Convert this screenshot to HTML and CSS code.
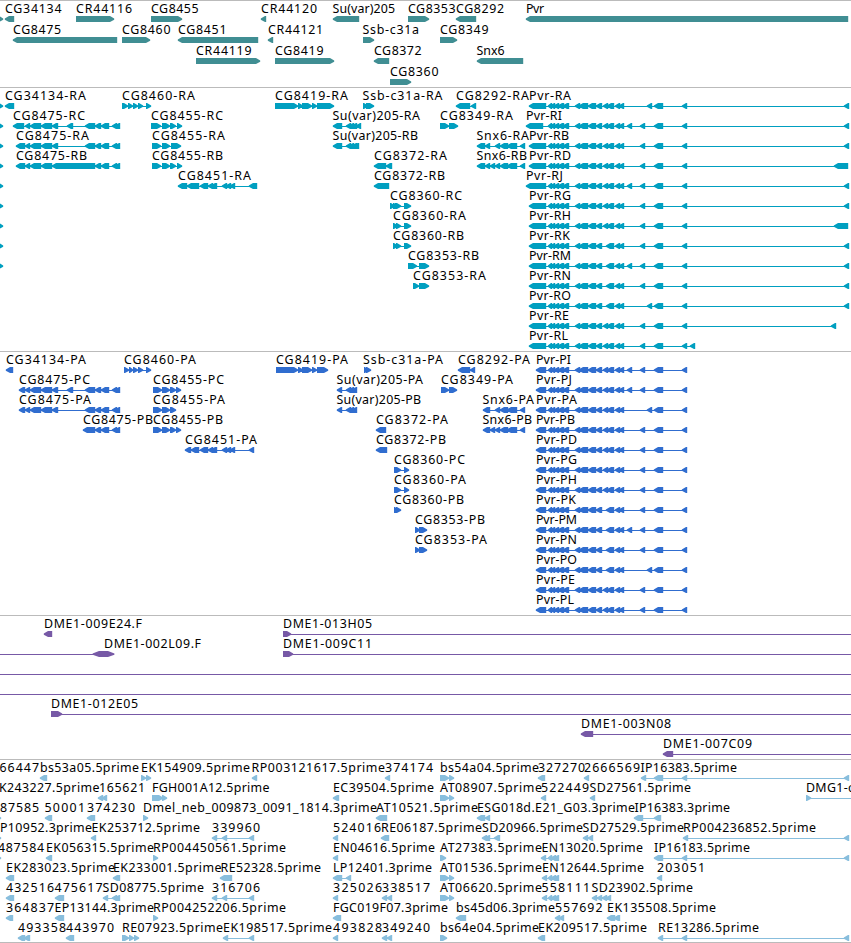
FILE: index.html
```html
<!DOCTYPE html>
<html lang="en">
<head>
<meta charset="utf-8">
<title>Genome tracks</title>
<link rel="stylesheet" href="styles.css">
</head>
<body>
<main class="browser" id="browser"></main>
<script src="tracks.js"></script>
</body>
</html>
```
FILE: styles.css
```css
* { box-sizing: border-box; }

body {
  margin: 0;
  background: #fff;
}

.browser {
  display: flex;
  flex-direction: column;
  width: 851px;
  height: 943px;
  overflow: hidden;
}

.track {
  flex: none;
  border-top: 1px solid #bbb;
  overflow: hidden;
}

.track svg {
  display: block;
  width: 100%;
  height: 100%;
}

.track text {
  fill: #000;
  font-family: "Noto Sans", "Open Sans", sans-serif;
  font-size: 12.4px;
  font-weight: 400;
  white-space: pre;
}

.track rect { shape-rendering: crispEdges; }

.genes { height: 87px; fill: #408e93; }
.transcripts { height: 264px; fill: #009fc0; }
.proteins { height: 264px; fill: #306dcf; }
.clones { height: 144px; fill: #7759a6; }
.ests { height: 184px; fill: #88bedd; border-bottom: 1px solid #bbb; }
```
FILE: tracks.js
```js
// Each row is a list of features: label|labelStart|labelEnd|direction|exons|lineStart-lineEnd
const edge = '|||R|-8,3';

// Exons shared by the spliced isoforms of Pvr
function pvr(name, end, o) {
  const start = o.start || 529;
  const ex = [[start, o.firstEnd || 546], [548, 552], [551, 555], [554, 559], [558, 564], [563, 569],
    [575, 580], [579, 588], [588, 596], [596, 602]];
  if (o.merged) ex.push([606, 614]); else ex.push([603, 608], [607, 614]);
  ex.push([615, 620], [619, 624]);
  if (o.extra) ex.push([627, 632]);
  ex.push(o.shifted ? [647, 652] : [640, 645], [654, 663], [682, 687]);
  if (o.last) ex.push(o.last);
  return name + '|' + start + '|' + end + '|L|' + ex.map(e => e.join(',')).join(' ');
}
const far = [844, 849], wide = [834, 848];
const tail = '85,95 95,101 101,109 112,117 115,120';
const c8475 = '25,30 30,41 41,52';
const c8451 = '200,208 208,213 211,217 222,227 226,231 230,235';
const c8419 = '298,303 302,312 312,317';
const snx = '495,500 500,508 507,517 520,525';
const hp = '346,351 349,354 352,357';
const en = '548,552 551,556 554,559';
const P = { start: 536 };

const tracks = [
  { cls: 'genes', pitch: 21, rows: [
    [edge, 'CG34134|5|61.5|L|5,14', 'CR44116|76|132|R|76,114', 'CG8455|151|198.5|R|151,182', 'CR44120|261|317|L|261,266', 'Su(var)205|332.5|395|L|333,359', 'CG8353|408|455.5|R|408,429', 'CG8292|456|504|L|456,476', 'Pvr|526|544|L|526,848'],
    ['CG8475|13|61|L|13,117', 'CG8460|122|170.5|R|122,150', 'CG8451|178|226.5|L|178,258', 'CR44121|268|323|L|268,273', 'Ssb-c31a|362.5|419|R|363,374', 'CG8349|440|488.5|R|440,457'],
    ['CR44119|196|251.5|R|196,260', 'CG8419|275|323.5|R|275,334', 'CG8372|374|421.5|L|374,389', 'Snx6|476.5|504.5|L|477,523'],
    ['CG8360|390|438.5|R|390,411']
  ]},
  { cls: 'transcripts', pitch: 20, rows: [
    [edge, 'CG34134-RA|5|86|L|5,14', 'CG8460-RA|122|195|R|122,128 128,133 133,138 138,143 146,151', 'CG8419-RA|275|348|R|275,298 ' + c8419 + ' 317,334', 'Ssb-c31a-RA|362.5|442.5|R|363,368 366,374', 'CG8292-RA|456|529|L|456,470 471,476', pvr('Pvr-RA', 571, { shifted: 1, last: far })],
    [edge, 'CG8475-RC|13|85|L|13,24 ' + c8475 + ' 52,58 67,73 ' + tail, 'CG8455-RC|151|223|R|151,161 162,170 170,176 177,182', 'Su(var)205-RA|332.5|420|L|333,342 ' + hp + ' 356,361', 'CG8349-RA|440|513|R|440,449 449,458', pvr('Pvr-RI', 562, { start: 526, firstEnd: 543, extra: 1, last: far })],
    [edge, 'CG8475-RA|16|89|L|16,25 ' + c8475 + ' 52,58 ' + tail, 'CG8455-RA|152|225|R|152,161 162,170 171,181', 'Su(var)205-RB|332.5|418|L|333,342 ' + hp + ' 354,359', 'Snx6-RA|476.5|529|L|477,485 485,490 ' + snx, pvr('Pvr-RB', 569, { last: far })],
    [edge, 'CG8475-RB|16|87|L|16,25 ' + c8475 + ' 52,95 ' + tail, 'CG8455-RB|152|223|R|152,161 162,170 170,176 177,182', 'CG8372-RA|374|447|L|374,386 386,392', 'Snx6-RB|476.5|527|L|477,485 485,490 490,495 ' + snx, pvr('Pvr-RD', 571, { last: wide })],
    [edge, 'CG8451-RA|178|251|L|178,187 187,199 ' + c8451 + ' 249,257', 'CG8372-RB|374|445|L|374,389', pvr('Pvr-RJ', 563, { start: 526, extra: 1, last: far })],
    [edge, 'CG8360-RC|390|462|R|390,395 393,398 395,401 404,411', pvr('Pvr-RG', 571, { last: far })],
    [edge, 'CG8360-RA|393|466|R|393,398 396,401 404,411', pvr('Pvr-RH', 571, { last: wide })],
    [edge, 'CG8360-RB|393|464|R|393,398 396,401 404,411', pvr('Pvr-RK', 570, { merged: 1, last: far })],
    [edge, 'CG8353-RB|408|479|R|408,417 419,429', pvr('Pvr-RM', 571, { merged: 1, extra: 1, last: far })],
    ['CG8353-RA|413|486|R|413,419 419,429', pvr('Pvr-RN', 571, { merged: 1, last: far })],
    [pvr('Pvr-RO', 571, { merged: 1, shifted: 1, last: far })],
    [pvr('Pvr-RE', 569, { last: [831, 836] })],
    [pvr('Pvr-RL', 568, { last: [690, 695] })]
  ]},
  { cls: 'proteins', pitch: 20, rows: [
    ['CG34134-PA|6|86|L|6,13', 'CG8460-PA|124|196|R|124,129 129,133 133,138 138,143 146,151', 'CG8419-PA|276|348|R|276,298 ' + c8419 + ' 317,328', 'Ssb-c31a-PA|363|443|R|364,368 366,371', 'CG8292-PA|458|530|L|458,470 470,475', pvr('Pvr-PI', 571, { ...P, extra: 1 })],
    ['CG8475-PC|19|90|L|19,25 ' + c8475 + ' 52,58 67,73 ' + tail, 'CG8455-PC|153|224|R|153,162 162,170 170,176 176,181', 'Su(var)205-PA|336.5|423|L|337,342 ' + hp, 'CG8349-PA|441|513|R|441,449 449,457', pvr('Pvr-PJ', 572, { ...P, extra: 1 })],
    ['CG8475-PA|19|91|L|19,25 ' + c8475 + ' 52,58 ' + tail, 'CG8455-PA|153|225|R|153,162 162,170 170,176', 'Su(var)205-PB|336.5|421|L|337,342 ' + hp, 'Snx6-PA|482.5|534|L|483,490 ' + snx, pvr('Pvr-PA', 577, { ...P, shifted: 1 })],
    ['CG8475-PB|83|153|L|83,95 95,101 101,109 112,117 115,120', 'CG8455-PB|153|223|R|153,162 162,170 170,176 176,181', 'CG8372-PA|376|448|L|376,386', 'Snx6-PB|482.5|532|L|483,490 490,495 ' + snx, pvr('Pvr-PB', 575, P)],
    ['CG8451-PA|185|257|L|185,191 191,199 ' + c8451 + ' 249,254', 'CG8372-PB|376|446|L|376,387', pvr('Pvr-PD', 577, P)],
    ['CG8360-PC|394|465|R|394,401 404,409', pvr('Pvr-PG', 577, P)],
    ['CG8360-PA|394|466|R|394,401 404,409', pvr('Pvr-PH', 577, P)],
    ['CG8360-PB|394|464|R|394,398 396,401', pvr('Pvr-PK', 576, { ...P, merged: 1 })],
    ['CG8353-PB|415|485|R|415,420 419,427', pvr('Pvr-PM', 577, { ...P, merged: 1, extra: 1 })],
    ['CG8353-PA|415|487|R|415,420 419,427', pvr('Pvr-PN', 577, { ...P, merged: 1 })],
    [pvr('Pvr-PO', 577, { ...P, merged: 1, shifted: 1 })],
    [pvr('Pvr-PE', 575, P)],
    [pvr('Pvr-PL', 574, P)]
  ]},
  { cls: 'clones', pitch: 20, rows: [
    ['DME1-009E24.F|44|142|L|44,52', 'DME1-013H05|283|372|R|283,291|283-851'],
    ['DME1-002L09.F|104|201|B|93,114|0-114', 'DME1-009C11|283|372|R|283,293|283-851'],
    ['||||0,0|0-851'],
    ['||||0,0|0-851'],
    ['DME1-012E05|51|138|R|51,62|51-851'],
    ['DME1-003N08|581|671|L|581,593|581-851'],
    ['DME1-007C09|663|752|L|663,673|663-851']
  ]},
  { cls: 'ests', pitch: 20, rows: [
    ['66447|-.5|39|', 'bs53a05.5prime|40|139|L|40,47', 'EK154909.5prime|141|250|R|141,146 146,151', 'RP003121617.5prime|251.5|385|L|252,257', '374174|385|433|L|385,390', 'bs54a04.5prime|440|539|R|440,449 449,454', '327270|538|585|L|538,545', '2666569|584|640|L|584,589', 'IP16383.5prime|640.5|737|L|641,646 654,663 682,687 844,849'],
    ['K243227.5prime|-1|99.5|', '165621|99|145|L|98,103 102,107', 'FGH001A12.5prime|152|269.5|R|152,163 162,167', 'EC39504.5prime|333|434|L|333,339', 'AT08907.5prime|440|542|R|440,449 449,454', '522449|541|589|L|541,546', 'SD27561.5prime|589.5|691|L|590,595', 'DMG1-c|806|854|R|806,811|806-851'],
    ['87585|0|39|R|-5,1', '50001|44.5|85|L|45,52', '374230|87|135|L|87,95', 'Dmel_neb_009873_0091_1814.3prime|143|377|R|143,148', 'AT10521.5prime|376|478|L|376,387', 'ESG018d.E21_G03.3prime|477|635|L|477,485 485,490', 'IP16383.3prime|634.5|730|L|634,643 654,661'],
    ['P10952.3prime|0|92|R|-5,1', 'EK253712.5prime|91.5|200|L|91,96', '339960|212|260|L|212,217 222,227 249,254', '524016|333|381|L|333,338', 'RE06187.5prime|381|482|L|381,389', 'SD20966.5prime|482|583|L|482,487 485,490 494,500', 'SD27529.5prime|582.5|684|L|583,588 588,593', 'RP004236852.5prime|683|816|L|683,688 844,849'],
    ['487584|-2|44|R|-5,1', 'EK056315.5prime|46|154|L|46,52', 'RP004450561.5prime|153|286|R|153,158', 'EN04616.5prime|333|435|L|333,338', 'AT27383.5prime|440|542|R|440,446', 'EN13020.5prime|541.5|643|L|541,546 ' + en, 'IP16183.5prime|654|750|L|654,663 682,687 844,849'],
    ['EK283023.5prime|6|115|L|6,14', 'EK233001.5prime|113|221.5|L|113,120', 'RE52328.5prime|220.5|321|L|220,232', 'LP12401.3prime|333|432|L|333,342 346,351', 'AT01536.5prime|440|542|R|440,449 449,454', 'EN12644.5prime|542|644|L|542,547 ' + en, '203051|657|705|L|657,662'],
    ['432516|6|54|L|6,14', '475617|54.5|102.5|L|55,64', 'SD08775.5prime|102.5|204|L|103,108 112,117 115,120', '316706|212|260|L|212,217 222,227 249,254', '325026|333|382|L|333,338', '338517|382|430|L|382,387 387,392', 'AT06620.5prime|440|542|R|440,449 449,454', '558111|541.5|590|L|542,547 ' + en, 'SD23902.5prime|591.5|693|L|592,597 597,602 602,607 606,611'],
    ['364837|6|54|L|6,13', 'EP13144.3prime|54.5|154|L|55,64', 'RP004252206.5prime|153|286|R|153,158', 'FGC019F07.3prime|333|448|L|333,341', 'bs45d06.3prime|456|555|L|456,466', '557692|555|602.5|L|555,560 559,564', 'EK135508.5prime|607|716|L|607,615 614,620'],
    ['493358|18|66|L|18,25 24,30', '443970|66|114|L|66,74', 'RE07923.5prime|122|223|R|122,129 129,134 134,139', 'EK198517.5prime|223|332|L|223,228 249,254', '493828|333|382|L|333,338', '349240|382|430|L|382,387 387,392', 'bs64e04.5prime|440|539|R|440,447', 'EK209517.5prime|538|647|L|538,545', 'RE13286.5prime|658|759|L|658,663 682,687 844,849']
  ]}
];

// Exon glyph with a blunt, tapered head pointing along the strand
function shape(a, b, y, dir) {
  const h = Math.min(5, b - a);
  if (dir === 'L') return `M${a - .2} ${y + 2.4}L${a + h - 1} ${y}H${b + .2}V${y + 6}H${a + h - 1}L${a - .2} ${y + 3.8}Z`;
  if (dir === 'B') return `M${a - .4} ${y + 2.4}L${a + 6} ${y}H${b - 6}L${b + .4} ${y + 2.4}V${y + 3.8}L${b - 6} ${y + 6}H${a + 6}L${a - .4} ${y + 3.8}Z`;
  return `M${b + .2} ${y + 2.4}L${b - h + 1} ${y}H${a}V${y + 6}H${b - h + 1}L${b + .2} ${y + 3.8}Z`;
}

const root = document.getElementById('browser');
tracks.forEach(t => {
  let out = '';
  t.rows.forEach((row, r) => {
    const base = 12 + r * t.pitch, top = 15 + r * t.pitch;
    row.forEach(f => {
      const [name, x, end, dir, exons, line] = f.split('|');
      if (name) out += `<text x="${x}" y="${base}" textLength="${end - x}">${name}</text>`;
      if (!exons) return;
      const ex = exons.split(' ').map(e => e.split(',').map(Number));
      const [l0, l1] = line ? line.split('-').map(Number) : [ex[0][0] + 2, ex[ex.length - 1][1] - 2];
      if (line || ex.length > 1) out += `<rect x="${l0}" y="${top + 3}" width="${l1 - l0}" height="1"/>`;
      if (dir) out += `<path d="${ex.map(e => shape(e[0], e[1], top, dir)).join('')}"/>`;
    });
  });
  root.insertAdjacentHTML('beforeend', `<section class="track ${t.cls}"><svg>${out}</svg></section>`);
});
```
